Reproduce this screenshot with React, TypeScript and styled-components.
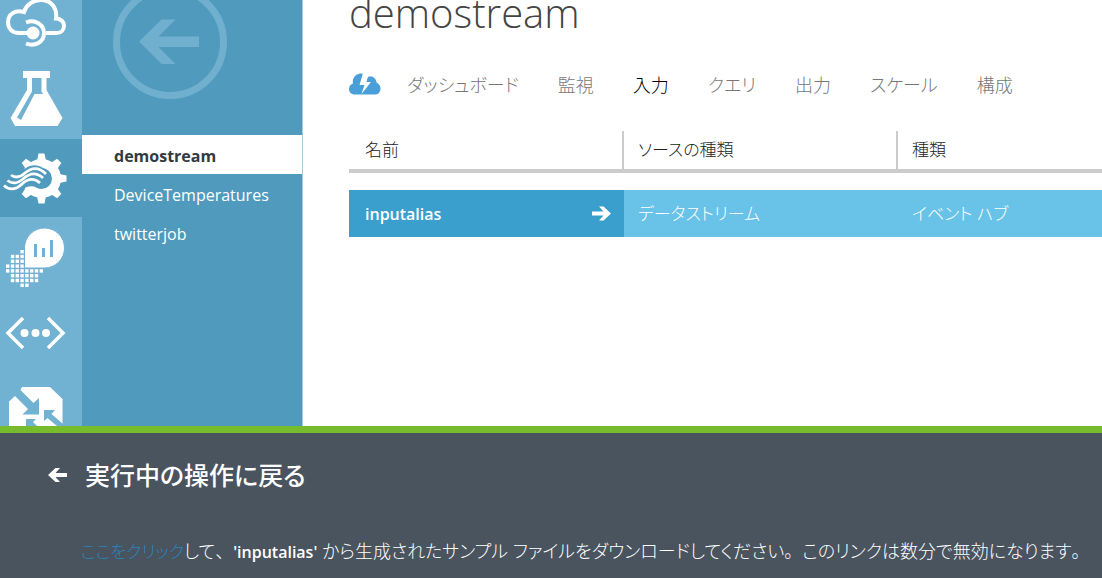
import React from "react";
import styled, { createGlobalStyle } from "styled-components";

const color = {
  rail: "#71b1d1",
  blue: "#509bbd",
  rowStrong: "#3a9fcc",
  row: "#69c2e8",
  rule: "#cccccc",
  green: "#76bc2d",
  slate: "#49545f",
  link: "#2a84bd",
};

const GlobalStyle = createGlobalStyle`
  * { box-sizing: border-box; }
  body {
    margin: 0;
    background: #fff;
    color: #333;
    font-family: "Open Sans", "Noto Sans CJK JP", sans-serif;
    font-size: 16px;
    font-feature-settings: "palt";
  }
`;

const Page = styled.div`
  display: flex;
  flex-direction: column;
  height: 100vh;
`;

const Workspace = styled.div`
  display: flex;
  flex: 1;
  min-height: 0;
  overflow: hidden;
`;

const Rail = styled.nav`
  display: flex;
  flex-direction: column;
  flex: none;
  width: 82px;
  margin-top: -17px;
  background: ${color.rail};
`;

const RailLink = styled.a<{ $active?: boolean }>`
  flex: none;
  height: 78px;
  background: ${(p) => (p.$active ? color.blue : "transparent")};

  svg { display: block; }
`;

const Sidebar = styled.aside`
  flex: none;
  width: 221px;
  background: ${color.blue};
  border-right: 1px solid #a5cbdd;
`;

const BackArea = styled.div`
  display: flex;
  align-items: flex-end;
  height: 135px;
  padding: 0 0 36px 30px;
`;

const BackButton = styled.button`
  flex: none;
  padding: 0;
  border: 0;
  background: none;

  svg { display: block; }
`;

const JobList = styled.ul`
  margin: 0;
  padding: 0;
  list-style: none;
`;

const JobLink = styled.a<{ $active?: boolean }>`
  display: block;
  padding: 3px 32px 0;
  line-height: 36px;
  text-decoration: none;
  color: ${(p) => (p.$active ? "#333a42" : "#fff")};
  background: ${(p) => (p.$active ? "#fff" : "transparent")};
  font-weight: ${(p) => (p.$active ? 700 : 400)};
`;

const Content = styled.main`
  flex: 1;
  min-width: 0;
  padding-left: 46px;
`;

const Title = styled.h1`
  margin: -17px 0 0;
  font-size: 40px;
  line-height: 60px;
  font-weight: 300;
  color: #444;
`;

const Tabs = styled.nav`
  display: flex;
  align-items: center;
  gap: 39px;
  height: 32px;
  margin: 25px 0 31px;
`;

const TabIcon = styled.a`
  flex: none;
  margin-right: -13px;

  svg { display: block; }
`;

const Tab = styled.a<{ $active?: boolean }>`
  padding-top: 2px;
  font-size: 18px;
  line-height: 30px;
  font-weight: 300;
  white-space: nowrap;
  text-decoration: none;
  color: ${(p) => (p.$active ? "#000" : "#777")};
`;

const InputTable = styled.table`
  width: 100%;
  table-layout: fixed;
  border-spacing: 0;
  text-align: left;

  tbody::before {
    content: "";
    display: block;
    height: 17px;
  }
`;

const Column = styled.col<{ $width?: number }>`
  width: ${(p) => (p.$width ? `${p.$width}px` : "auto")};
`;

const HeadCell = styled.th`
  height: 42px;
  padding: 0 14px;
  border-bottom: 4px solid ${color.rule};
  background: linear-gradient(${color.rule}, ${color.rule}) right / 2px 100% no-repeat;
  font-size: 17px;
  line-height: 24px;
  font-weight: 300;
  color: #222;

  &:first-child { padding-left: 16px; }
  &:last-child { background: none; }
`;

const Cell = styled.td`
  height: 47px;
  padding: 0 14px 2px;
  background: ${color.row};
  color: #fff;
  font-size: 17px;
  font-weight: 300;
`;

const NameCell = styled.th`
  height: 47px;
  padding: 0 12px 0 16px;
  background: ${color.rowStrong};
  color: #fff;
  font-size: 16px;
  font-weight: 600;
`;

const NameRow = styled.div`
  display: flex;
  align-items: center;
  justify-content: space-between;
`;

const IconButton = styled.button`
  flex: none;
  padding: 0;
  border: 0;
  background: none;

  svg { display: block; }
`;

const Notice = styled.footer`
  flex: none;
  padding: 24px 0 9px 47px;
  border-top: 7px solid ${color.green};
  background: ${color.slate};
  color: #fff;
`;

const NoticeHead = styled.div`
  display: flex;
  align-items: center;
  gap: 18px;
`;

const NoticeTitle = styled.h2`
  margin: 0;
  font-size: 25px;
  line-height: 36px;
  font-weight: 500;
`;

const NoticeText = styled.p`
  margin: 41px 0 0 34px;
  font-size: 18px;
  line-height: 34px;
  font-weight: 300;
  white-space: nowrap;
`;

const DownloadLink = styled.a`
  font-size: 17px;
  color: ${color.link};
  text-decoration: none;
`;

const AliasName = styled.span`
  font-size: 16px;
  font-weight: 600;
`;

const FullWidth = styled.span`
  font-feature-settings: normal;
`;

const RailSvg = ({ children }: { children: React.ReactNode }) => (
  <svg width="82" height="78" viewBox="0 0 82 78" fill="#fff" aria-hidden="true">
    {children}
  </svg>
);

const CloudServiceIcon = () => (
  <RailSvg>
    <g fill="none" stroke="#fff" strokeWidth="4">
      <path d="M30 50H19C12 50 8 45 8 39.500C8 31 15 26.500 24 29C26 22 33 17 41 17C51 17 57.500 25 56 35.500C61 35.500 64 39 64 42.500C64 47 61 50 57 50H46" />
      <path d="M26 39.500C35 36 44 41.500 44 50C44 59 35 64 26 60.500" />
    </g>
    <circle cx="33" cy="50" r="6.500" />
  </RailSvg>
);

const FlaskIcon = () => (
  <RailSvg>
    <path
      fillRule="evenodd"
      d="M23 10H50V17H46.500V29L62.500 57L57.500 65H15L10.500 57L27 29V17H23ZM32 17V30.500L17 56.500L21 59L34.500 33H43L41.500 30.500V17Z"
    />
  </RailSvg>
);

const waves = [
  "M11 36C15 39 20 38.500 25 34C32 28 39 28 46 35",
  "M7.500 41.500C12 45 18 44.500 23 40C30 33.500 37 33.500 43 39",
  "M4 46.500C9 51.500 16 51 22 45C28 39.500 34 38.500 40 44",
];

const StreamGearIcon = () => (
  <RailSvg>
    <circle cx="41.500" cy="39.500" r="15" fill="none" stroke="#fff" strokeWidth="9" />
    {[0, 45, 90, 135, 180, 225, 270, 315].map((a) => (
      <path key={a} d="M37 22L38.500 14.500H44.500L46 22Z" transform={`rotate(${a} 41.500 39.500)`} />
    ))}
    <path d="M2 30C12 34 20 34 26 29C34 23 44 27 51 36L40 50C34 46 26 46 20 53L2 54Z" fill={color.blue} />
    <g fill="none" stroke="#fff" strokeWidth="2.800">
      {waves.map((d) => <path key={d} d={d} />)}
    </g>
  </RailSvg>
);

const globeSteps = [0, 1, 2, 3, 4, 5, 6, 7];
const globeCells = globeSteps
  .flatMap((row) => globeSteps.map((col) => ({ x: 6 + col * 4.8, y: 33 + row * 4.8 })))
  .filter(({ x, y }) => Math.hypot(x + 1.7 - 24.5, y + 1.7 - 51.5) < 17.8);

const ChartGlobeIcon = () => (
  <RailSvg>
    {globeCells.map(({ x, y }) => (
      <rect key={`${x}-${y}`} x={x} y={y} width="3.400" height="3.400" />
    ))}
    <path d="M44.500 11A20 20 0 1 1 44.500 51H24.500V31A20 20 0 0 1 44.500 11Z" stroke={color.rail} strokeWidth="1" />
    <path d="M34 27H37V40H34ZM42 31H45V40H42ZM50 23H53V40H50Z" fill={color.rail} />
  </RailSvg>
);

const CodeIcon = () => (
  <RailSvg>
    <path d="M23 23L8 38L23 53M48 23L63 38L48 53" fill="none" stroke="#fff" strokeWidth="3.500" />
    <circle cx="24.500" cy="38" r="4" />
    <circle cx="35.500" cy="38" r="4" />
    <circle cx="46" cy="38" r="4" />
  </RailSvg>
);

const ConvergeIcon = () => (
  <RailSvg>
    <path d="M22 14H50L62.500 26V56L50 68H22L9 56V28Z" />
    <g fill={color.rail}>
      <path d="M9 12L22 13.500L20.500 17L33.500 30L39 25V41.500H22.500L28 36L15 23L9 28.500Z" />
      <path d="M44 37H55L51.500 41L63 51V58L47.500 45L44 48Z" />
      <path d="M26 46H36L33 49L45 61L40 64L29 53L26 57Z" />
    </g>
  </RailSvg>
);

const BackCircleIcon = () => (
  <svg width="116" height="114" viewBox="0 0 116 114" aria-hidden="true">
    <circle cx="58" cy="57" r="53.500" fill="none" stroke="#71afce" strokeWidth="7" />
    <path d="M27 56.500L49.500 34.500H63.500L46.500 51.500H87V62H46.500L63.500 79H49.500Z" fill="#71afce" />
  </svg>
);

const StormCloudIcon = () => (
  <svg width="32" height="22" viewBox="0 0 32 22" aria-hidden="true">
    <path
      d="M6 21.500C2 21.500 0 19 0 16C0 13 2 11 4 10.500C3 6 6 1 11 0.500C14 0 17 1 18 4C22 2.500 27 4 27.500 9.500C30 11 32 13 31.500 16.500C31 19.500 29 21.500 26 21.500Z"
      fill="#4b9fd9"
    />
    <path d="M14 0L10.500 12H15.500L12.500 21L22 9H17.500L20 0Z" fill="#fff" />
    <path d="M18 7.500C19 4 21.500 3 24 4L22 8.500Z" fill="#4b9fd9" />
  </svg>
);

const ArrowIcon = ({ left }: { left?: boolean }) => (
  <svg width="20" height="16" viewBox="0 0 20 16" aria-hidden="true">
    <path
      d={left
        ? "M1 8L8.500 1H13L8.500 6H20V10H8.500L13 15H8.500Z"
        : "M19 7.500L11.500 0.500H7L11.500 5.500H0V9.500H11.500L7 14.500H11.500Z"}
      fill="#fff"
    />
  </svg>
);

const services = [
  { name: "Cloud services", Icon: CloudServiceIcon },
  { name: "Machine learning", Icon: FlaskIcon },
  { name: "Stream analytics", Icon: StreamGearIcon, active: true },
  { name: "Insights", Icon: ChartGlobeIcon },
  { name: "API", Icon: CodeIcon },
  { name: "Networks", Icon: ConvergeIcon },
];

const jobs = ["demostream", "DeviceTemperatures", "twitterjob"];
const tabs = ["ダッシュボード", "監視", "入力", "クエリ", "出力", "スケール", "構成"];

export default function App() {
  return (
    <Page>
      <GlobalStyle />
      <Workspace>
        <Rail>
          {services.map(({ name, Icon, active }) => (
            <RailLink key={name} href="#" aria-label={name} $active={active}>
              <Icon />
            </RailLink>
          ))}
        </Rail>
        <Sidebar>
          <BackArea>
            <BackButton type="button" aria-label="戻る">
              <BackCircleIcon />
            </BackButton>
          </BackArea>
          <JobList>
            {jobs.map((job, i) => (
              <li key={job}>
                <JobLink href="#" $active={i === 0}>{job}</JobLink>
              </li>
            ))}
          </JobList>
        </Sidebar>
        <Content>
          <Title>demostream</Title>
          <Tabs>
            <TabIcon href="#" aria-label="クイック スタート">
              <StormCloudIcon />
            </TabIcon>
            {tabs.map((tab) => (
              <Tab key={tab} href="#" $active={tab === "入力"}>{tab}</Tab>
            ))}
          </Tabs>
          <InputTable>
            <colgroup>
              <Column $width={275} />
              <Column $width={274} />
              <Column />
            </colgroup>
            <thead>
              <tr>
                <HeadCell scope="col">名前</HeadCell>
                <HeadCell scope="col">ソースの種類</HeadCell>
                <HeadCell scope="col">種類</HeadCell>
              </tr>
            </thead>
            <tbody>
              <tr>
                <NameCell scope="row">
                  <NameRow>
                    inputalias
                    <IconButton type="button" aria-label="inputalias を開く">
                      <ArrowIcon />
                    </IconButton>
                  </NameRow>
                </NameCell>
                <Cell>データストリーム</Cell>
                <Cell>イベント ハブ</Cell>
              </tr>
            </tbody>
          </InputTable>
        </Content>
      </Workspace>
      <Notice>
        <NoticeHead>
          <IconButton type="button" aria-label="戻る">
            <ArrowIcon left />
          </IconButton>
          <NoticeTitle>実行中の操作に戻る</NoticeTitle>
        </NoticeHead>
        <NoticeText>
          <DownloadLink href="#">ここをクリック</DownloadLink>
          して<FullWidth>、</FullWidth>
          <AliasName>'inputalias'</AliasName> から生成されたサンプル ファイルをダウンロードしてください
          <FullWidth>。</FullWidth>このリンクは数分で無効になります<FullWidth>。</FullWidth>
        </NoticeText>
      </Notice>
    </Page>
  );
}
